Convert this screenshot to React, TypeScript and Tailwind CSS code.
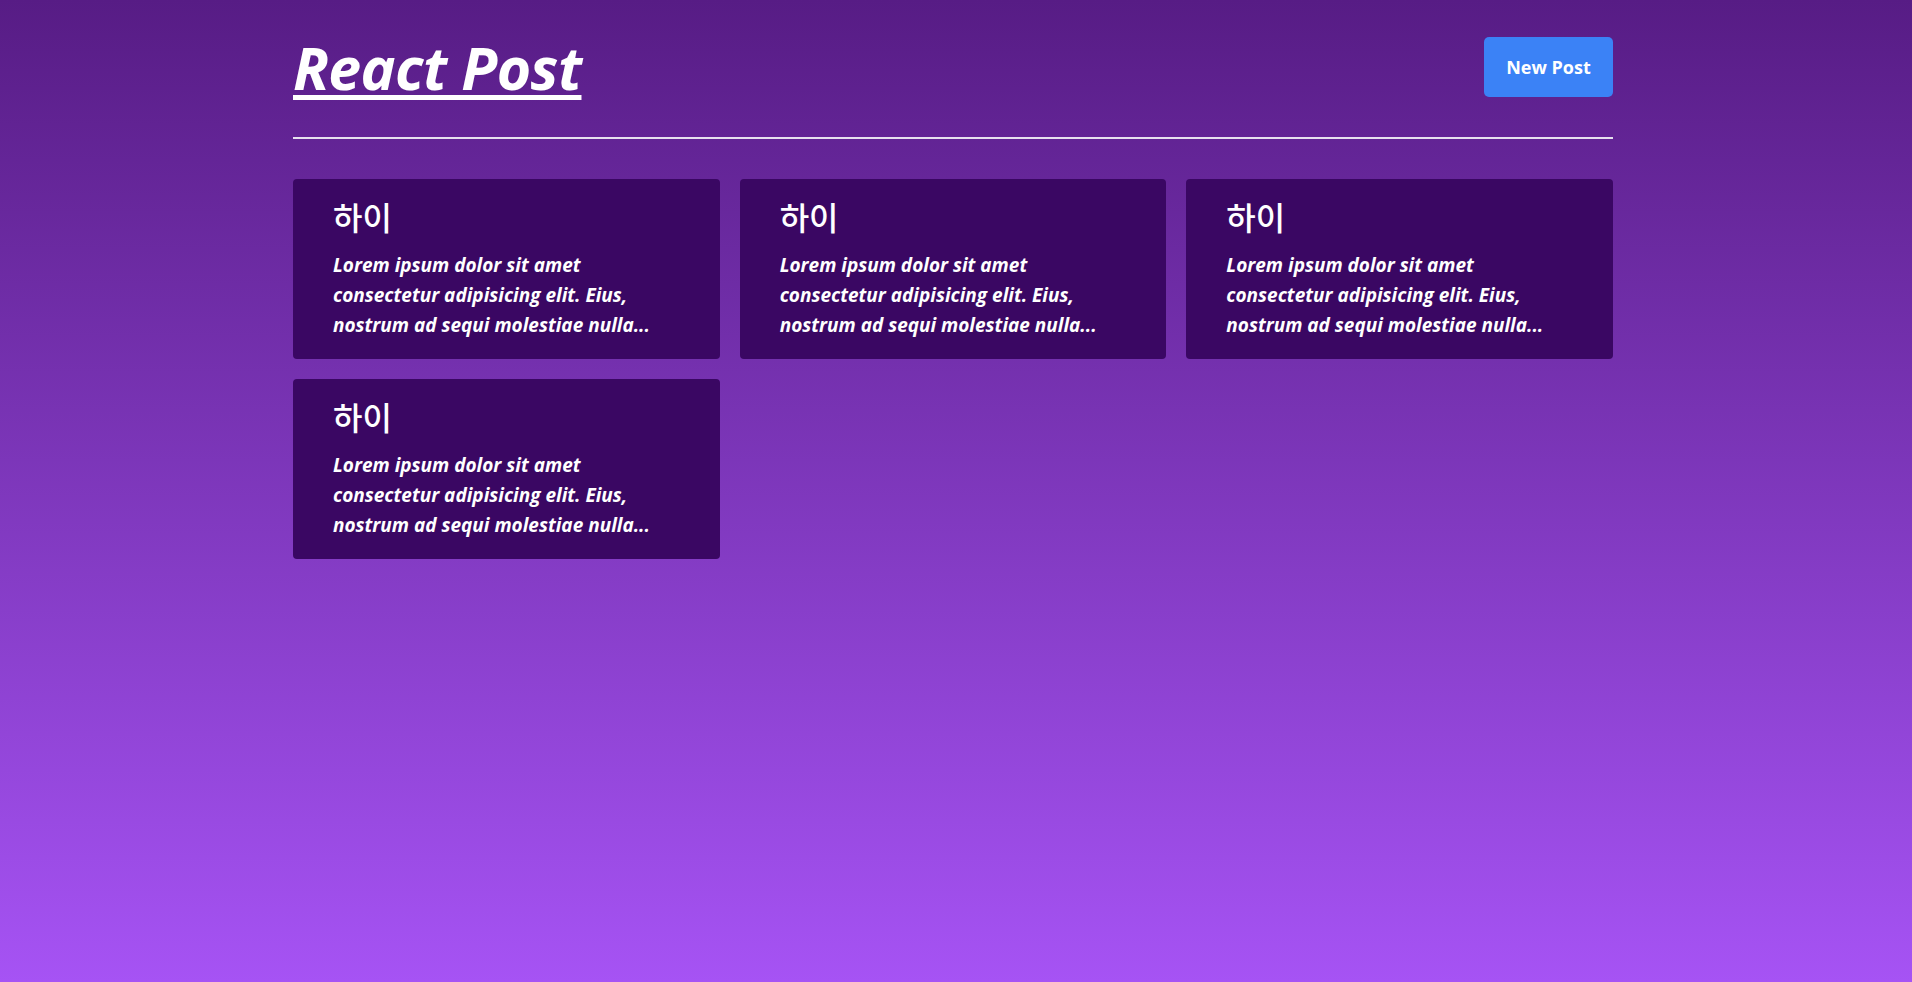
import React from "react";

const posts = [1, 2, 3, 4];

export default function App() {
  return (
    <div className="min-h-screen w-full bg-[linear-gradient(to_bottom,#571c85,#a653f4)] text-white">
      <div className="ml-[293px] w-[1320px] font-['Open_Sans','Noto_Sans_CJK_KR',sans-serif]">
        <header className="flex items-center justify-between border-b-2 border-[#e6e1ee] pt-[37px] pb-[40px]">
          <h1 className="text-[59px] leading-[60px] font-bold italic underline decoration-[5px] underline-offset-[5px] tracking-[-0.6px]">
            React Post
          </h1>
          <button className="flex h-[60px] w-[129px] items-center justify-center rounded-[5px] bg-[#3b82f6] text-[18px] font-bold text-white">
            New Post
          </button>
        </header>
        <main className="mt-10 grid grid-cols-3 gap-5">
          {posts.map((p) => (
            <div
              key={p}
              className="h-[180px] rounded-[4px] bg-[#3a0763] px-10 pt-[19px]"
            >
              <h2 className="font-['Noto_Sans_CJK_KR',sans-serif] text-[32px] leading-[36px] font-medium">
                하이
              </h2>
              <p className="mt-[16px] text-[19px] leading-[30px] font-bold italic">
                <span className="block">Lorem ipsum dolor sit amet</span>
                <span className="block">consectetur adipisicing elit. Eius,</span>
                <span className="block">nostrum ad sequi molestiae nulla...</span>
              </p>
            </div>
          ))}
        </main>
      </div>
    </div>
  );
}
